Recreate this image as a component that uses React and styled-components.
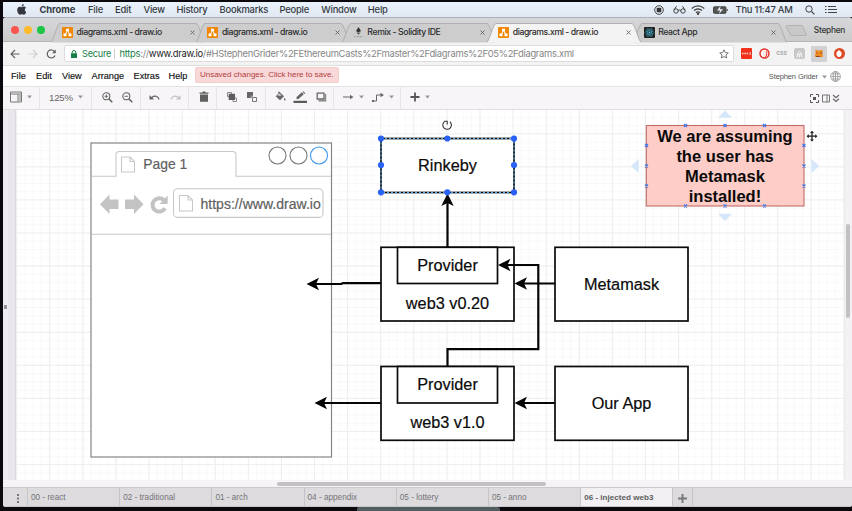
import React from 'react';
import styled, { createGlobalStyle } from 'styled-components';

const Global = createGlobalStyle`
  * { box-sizing: border-box; }
  html, body { margin: 0; background: #08070a; }
  body { width: 852px; height: 511px; overflow: hidden; font-family: "Liberation Sans", Arial, sans-serif; }
  svg { display: block; flex: none; }
`;

const Screen = styled.div`
  width: 852px; height: 511px; padding: 2px 0 0 3px; overflow: hidden;
  display: flex; flex-direction: column; background: #0b090d;
`;

/* ---------- macOS menu bar ---------- */
const MacBar = styled.header`
  height: 15px; flex: none; display: flex; align-items: center;
  background: linear-gradient(#eaf2fb, #e1e8f1);
  font: 500 9.4px/15px Inter, sans-serif; color: #343a42;
`;
const MacLogo = styled.div`width: 36.5px; padding-left: 13.5px;`;
const MacItem = styled.span`
  width: ${p => p.$w}px; flex: none; white-space: nowrap; letter-spacing: ${p => p.$ls ?? -0.2}px;
  font-weight: ${p => (p.$bold ? 700 : 500)};
`;
const MacStatus = styled.div`display: flex; align-items: center; margin-left: auto; padding-right: 15px;`;
const Spaced = styled.div`margin-left: ${p => p.$ml || 0}px; flex: none; display: flex; align-items: center;`;

/* ---------- browser window ---------- */
const Window = styled.main`
  height: 490px; flex: none; display: flex; flex-direction: column; overflow: hidden;
  border-radius: 3px; background: #f3f2f4; border-top: 1px solid #aeb2b8;
`;
const TabStrip = styled.div`
  height: 24px; flex: none; display: flex; align-items: flex-end;
  background: linear-gradient(#d6d7d9, #cbcbcc); border-bottom: 1px solid #b4b4b4;
`;
const Lights = styled.div`width: 48px; height: 23px; padding: 8px 0 0 8px; display: flex; gap: 5.2px;`;
const Light = styled.i`width: 8px; height: 8px; border-radius: 50%; background: ${p => p.$c};`;
const TabBox = styled.div`
  position: relative; width: 154px; height: 19px; margin: 0 -8.6px -1px 0; flex: none;
  z-index: ${p => (p.$active ? 2 : 1)};
  display: flex; align-items: center; padding: 0 10.5px 0 11px;
  font: 500 8.7px/19px Inter, sans-serif; color: #2b2b2b; white-space: nowrap;
`;
const TabShape = styled.svg`position: absolute; left: 0; top: 0; z-index: -1;`;
const TabTitle = styled.span`flex: 1; margin-left: 3.5px; letter-spacing: ${p => p.$ls}px;`;
const NewTab = styled.div`width: 24px; padding: 0 0 2px 7px; height: 17px;`;
const Profile = styled.span`margin-left: auto; padding-right: 7px; font: 500 8.3px/22px Inter, sans-serif; letter-spacing: -0.25px; color: #333;`;

const NavBar = styled.div`
  height: 24px; flex: none; display: flex; align-items: center; background: #f4f3f4;
  border-bottom: 1px solid #dedede; padding-right: 7px;
`;
const NavButtons = styled.div`width: 61px; display: flex; gap: 8px; padding-left: 7px;`;
const Omnibox = styled.div`
  width: 670px; height: 17px; background: #fff; border: 1px solid #dcdcdc; border-radius: 2px;
  display: flex; align-items: center; padding: 0 4px 0 6px;
  font: 400 9.4px/15px Inter, sans-serif; color: #858585; white-space: nowrap;
`;
const Secure = styled.span`
  margin-left: 5px; width: 33px; color: #178049; letter-spacing: -0.25px; border-right: 1px solid #ccc;
  line-height: 10px; font-size: 9.2px;
`;
const Url = styled.span`flex: 1; margin-left: 4.5px; letter-spacing: -0.285px; em { font-style: normal; color: #178049; } b { font-weight: 400; color: #222; }`;
const Extensions = styled.div`flex: 1; display: flex; align-items: center; justify-content: space-between; padding-left: 7px;`;
const ExtTile = styled.div`
  width: ${p => p.$w || 11}px; height: ${p => p.$h || 11}px; border-radius: ${p => p.$r ?? 1}px;
  background: ${p => p.$bg || 'transparent'}; display: flex; align-items: center; justify-content: center;
  font: 600 6.5px/11px Inter, sans-serif; color: #aaa;
`;

/* ---------- editor ---------- */
const MenuRow = styled.nav`
  height: 21px; flex: none; display: flex; align-items: center; background: #fff; padding: 0 11px 0 8px;
  font-size: 9.2px; color: #111; border-bottom: 1px solid #e4e2e4;
`;
const MenuItem = styled.span`width: ${p => p.$w}px; flex: none; padding-bottom: 1px; -webkit-text-stroke: 0.15px #111;`;
const SaveNotice = styled.div`
  width: 144px; height: 16px; margin: 0 0 2px 0; border-radius: 2px; background: #f8d8d8; border: 1px solid #f3cccc;
  color: #b2403f; font-size: 8px; line-height: 14px; padding-left: 4px; white-space: nowrap; letter-spacing: -0.02px;
`;
const User = styled.div`margin-left: auto; display: flex; align-items: center; gap: 3.5px; font-size: 7.5px; color: #555; padding-top: 1px; letter-spacing: -0.12px;`;
const ToolRow = styled.div`
  height: 23px; flex: none; display: flex; background: #f7f5f7; border-bottom: 1px solid #e0dee0; color: #666;
`;
const ToolGroup = styled.div`
  width: ${p => p.$w}px; height: 22px; flex: none; display: flex; align-items: center; padding: 0 0 2px ${p => p.$pl}px;
  gap: ${p => p.$gap || 0}px; border-right: 1px solid ${p => (p.$last ? 'transparent' : '#e6e4e6')};
`;
const Zoom = styled.span`width: 24px; font-size: 9.6px; color: #666; letter-spacing: -0.15px;`;
const ViewTools = styled.div`margin-left: auto; display: flex; align-items: center; gap: 2.5px; padding: 0 12px 0 0;`;

const Workspace = styled.div`height: 370px; flex: none; display: flex; background: #e9e7eb;`;
const SideRail = styled.aside`width: 13px; border-right: 1px solid #dcdadd; border-left: 5px solid #eeecf0; display: flex; align-items: center;`;
const Grip = styled.i`width: 3px; height: 4px; margin: 24px 0 0 -4px; background: #96949a; flex: none;`;
const Canvas = styled.section`position: relative; width: 828px; height: 370px; background: #fff; overflow: hidden;`;
const Art = styled.svg`position: absolute; left: 0; top: 0;`;
const Node = styled.div`
  position: absolute; left: ${p => p.$x - 16}px; top: ${p => p.$y - 110}px; width: ${p => p.$w}px; height: ${p => p.$h}px;
  display: flex; align-items: ${p => (p.$low ? 'flex-end' : 'center')}; justify-content: center; text-align: center;
  padding-bottom: ${p => (p.$low ? 8 : 0)}px;
  font-size: 16.3px; line-height: 20px; color: #0a0a0a; white-space: pre; -webkit-text-stroke: 0.2px #0a0a0a;
`;
const Note = styled(Node)`font-weight: 700; font-size: 16.5px; -webkit-text-stroke: 0;`;
const Mock = styled.span`
  position: absolute; left: ${p => p.$x - 16}px; top: ${p => p.$y - 110}px; font-size: ${p => p.$s}px; line-height: 16px; color: #5f5f5f; white-space: nowrap;
  -webkit-text-stroke: 0.2px #5f5f5f;
`;
const VScroll = styled.div`width: 8px; background: #f3f1f4; padding: 114px 2px 0 1px; border-left: 1px solid #ebe9ec;`;
const VThumb = styled.i`display: block; width: 4px; height: 94px; border-radius: 2px; background: #c2c0c3;`;
const HScroll = styled.div`height: 7px; flex: none; background: #f6f4f7; padding: 2px 0 0 274px;`;
const HThumb = styled.i`display: block; width: 269px; height: 4px; border-radius: 2px; background: #c2c0c3;`;

const PageBar = styled.footer`
  height: 20px; flex: none; display: flex; background: #dddbde; border-top: 1px solid #cbc9cc; padding-left: 5px;
  border-bottom: 1px solid #c9c7ca;
`;
const PageMenu = styled.div`width: 20px; border-right: 1px solid #c6c4c7; display: flex; align-items: center; justify-content: center; padding-top: 2px;`;
const PageTab = styled.div`
  width: 92.2px; padding-left: 3px; border-right: 1px solid #c6c4c7; font-size: ${p => (p.$active ? 8.1 : 8.2)}px; line-height: 20px;
  color: ${p => (p.$active ? '#5e5e5e' : '#757376')}; font-weight: ${p => (p.$active ? 700 : 400)};
  background: ${p => (p.$active ? '#f1eff2' : 'transparent')}; white-space: nowrap;
`;
const AddPage = styled(PageMenu)`width: 20px;`;
const Dock = styled.div`height: 4px; width: 143px; margin-left: 354px; background: #525d60; flex: none; border-radius: 2px 2px 0 0;`;

/* ---------- icons ---------- */
const Caret = () => <svg width="5" height="4"><path d="M0 .5h5L2.5 3.5z" fill="#999" /></svg>;
const DrawIo = () => (
  <svg width="11" height="11" viewBox="0 0 11 11">
    <rect width="11" height="11" rx=".8" fill="#f08705" />
    <path d="M5.5 3.5 3 8M5.5 3.5 8 8" stroke="#fff" strokeWidth="1" />
    <path d="M4 1.7h3v2.6H4zM1.5 6.5h3v2.7h-3zM6.5 6.5h3v2.7h-3z" fill="#fff" />
  </svg>
);
const Remix = () => (
  <svg width="11" height="11" viewBox="0 0 11 11">
    <path d="M5.5 0 8 4 5.5 5.6 3 4zM3.2 4.8l2.3 1.5 2.3-1.5-2.3 3z" fill="#333" />
    <path d="M1 9.7h9" stroke="#888" strokeWidth=".8" strokeDasharray="1 .5" />
  </svg>
);
const ReactIcon = () => (
  <svg width="11" height="11" viewBox="0 0 11 11">
    <rect width="11" height="11" rx="1" fill="#222" />
    <g fill="none" stroke="#3fa9c4" strokeWidth=".6">
      {[0, 60, 120].map(a => <ellipse key={a} cx="5.5" cy="5.5" rx="4.4" ry="1.7" transform={`rotate(${a} 5.5 5.5)`} />)}
    </g>
    <circle cx="5.5" cy="5.5" r=".8" fill="#61dafb" />
  </svg>
);
const Close = () => <svg width="5" height="5"><path d="M.5.5l4 4m0-4l-4 4" stroke="#666" strokeWidth=".9" /></svg>;
const Magnifier = ({ plus }) => (
  <svg width="11" height="11" viewBox="0 0 11 11" fill="none" stroke="#666">
    <circle cx="4.3" cy="4.3" r="3.5" strokeWidth="1.1" /><path d="M6.900 6.900l3.400 3.400" strokeWidth="1.5" />
    <path d={plus ? 'M2.5 4.3h3.600M4.3 2.5v3.600' : 'M2.5 4.3h3.600'} strokeWidth=".9" />
  </svg>
);
const Undo = ({ flip }) => (
  <svg width="11" height="7" viewBox="0 0 11 7">
    <g transform={flip ? 'translate(11 0) scale(-1 1)' : undefined} fill={flip ? '#c4c2c4' : '#666'}>
      <path d="M.5 1v4.5H5L3.4 3.8C5.8 2 8.5 2.7 9.6 5.8l1-.5C9.3 1.4 5.4.5 2.4 2.9z" />
    </g>
  </svg>
);
const Trash = () => <svg width="10" height="12"><path d="M.5 1.4h2.7L4 .6h2l.8.8h2.7v1.3h-9zM1 3.5h8v7.3H1z" fill="#5f5f5f" /></svg>;
const Layers = ({ back }) => back ? (
  <svg width="12" height="12">
    <path d="M1 1h6v6H1z" fill="#666" />
    <path d="M4.500 4.500h2.500v2.500H4.500z" fill="#999" />
    <path d="M7 6.500h3.500V10.500H6.500V7" fill="#f7f5f7" stroke="#777" />
  </svg>
) : (
  <svg width="12" height="12">
    <path d="M1.500 1.500h4v4h-4zM7 7h3.500v3.500H7z" fill="#f7f5f7" stroke="#888" />
    <path d="M2.700 2.700h6.300v6.300H2.700z" fill="#5c5c5c" />
  </svg>
);
const Fill = () => (
  <svg width="11" height="12" viewBox="0 0 11 12">
    <path d="M3 1.2l1-.7 5 4.8-4 4-4.3-4 3-2.8z" fill="#666" /><path d="M2.400 4.600h4.200L4.600 2.700z" fill="#f7f5f7" /><path d="M9.7 6.8c1.3 1.7 1 2.7 0 2.7s-1.200-1 0-2.700z" fill="#666" />
  </svg>
);
const Pencil = () => <svg width="15" height="13"><path d="M3.500 8 3.600 6 8.800 1.300l2 2L5.500 8zM9.500.8l.8-.6 2 2-.8.7z" fill="#666" /><path d="M.5 9.700h13.500v2.300H.5z" fill="#5c5c5c" /></svg>;
const Shadow = () => <svg width="11" height="10"><path d="M1.200 1.200h6.800v5.800H1.200z" fill="none" stroke="#666" strokeWidth="1.300" /><path d="M9.500 2v6.800H2.500" fill="none" stroke="#888" strokeWidth="1.400" /></svg>;

const Tab = ({ icon, title, active, ls = -0.05 }) => (
  <TabBox $active={active}>
    <TabShape width="154" height="20">
      <path d="M0 19.500 C2.500 18 6 1 9 .5 H145 C148 1 151.500 18 154 19.500 Z" fill={active ? '#f4f3f4' : '#cdcdce'} />
      <path d="M0 19 C2.500 18 6 1 9 .5 H145 C148 1 151.500 18 154 19" fill="none" stroke="#aaaaab" strokeWidth=".9" />
    </TabShape>
    {icon}<TabTitle $ls={ls}>{title}</TabTitle><Close />
  </TabBox>
);

/* Diagram geometry uses window coordinates; the viewBox shifts it into the canvas. */
const HANDLES = [[381, 138.500], [447.300, 138.500], [514, 138.500], [381, 165], [514, 165], [381, 192.300], [447.300, 192.300], [514, 192.300]];
const PORTS = [[685.500, 125.500], [725, 125.500], [764.500, 125.500], [685.500, 206], [725, 206], [764.500, 206], [646.500, 145.500], [646.500, 166], [646.500, 186], [804, 145.500], [804, 166], [804, 186]];
const Head = ({ x, y, up }) => <path transform={`translate(${x} ${y})${up ? ' rotate(90)' : ''}`} d="M0 0 12.500-6.200 9.500 0 12.500 6.200z" fill="#050505" />;

const Diagram = () => (
  <Art width="828" height="370" viewBox="16 110 828 370">
    <defs>
      <pattern id="minor" x="16.250" y="100.300" width="8.270" height="8.270" patternUnits="userSpaceOnUse">
        <path d="M0 .5H8.270M.5 0V8.270" stroke="#f8f8f8" fill="none" />
      </pattern>
      <pattern id="major" x="16.150" y="100.200" width="33.100" height="33.070" patternUnits="userSpaceOnUse">
        <path d="M0 .5H33.100M.5 0V33.070" stroke="#eeeeee" fill="none" />
      </pattern>
    </defs>
    <rect x="16" y="110" width="828" height="370" fill="url(#minor)" />
    <rect x="16" y="110" width="828" height="370" fill="url(#major)" />

    <rect x="91" y="143" width="240.500" height="314" fill="#fff" stroke="#858585" strokeWidth="1.200" />
    <g fill="none" stroke="#c8c8c8" strokeWidth="1.100">
      <path d="M92 176.300H116V155q0-3.500 3.500-3.500H232.500q3.500 0 3.500 3.500V176.300H331M92 234.300H331" />
      <rect x="173.500" y="188.700" width="149.500" height="28.700" rx="4" />
      <path d="M121.500 157h8.500l4.500 4.500v10.500h-13zM130 157v4.500h4.500M179.500 195.500h8.500l4.500 4.500v11h-13zM188 195.500v4.500h4.500" />
    </g>
    <g fill="none" strokeWidth="1.100">
      <circle cx="277.500" cy="155.500" r="8.500" stroke="#777" /><circle cx="298.500" cy="155.500" r="8.500" stroke="#777" /><circle cx="319" cy="155.500" r="8.500" stroke="#3b95f0" />
    </g>
    <path d="M100 204.200 109.500 194.500V199.500H118.500V209H109.500V214zM143.500 204.200 134 194.500V199.500H125V209H134V214z" fill="#c3c3c3" />
    <path d="M165 208.300a6.700 6.700 0 1 1-1.200-8.300" fill="none" stroke="#c3c3c3" strokeWidth="4" />
    <path d="M167.700 195.500V204H159.500z" fill="#c3c3c3" />

    <g fill="#fff" stroke="#0a0a0a" strokeWidth="1.700">
      <rect x="381" y="138.500" width="133" height="54" />
      <rect x="381" y="247.300" width="133" height="73.700" /><rect x="397.500" y="247.300" width="100" height="36.200" />
      <rect x="381" y="366.500" width="133" height="73.800" /><rect x="397.500" y="366.500" width="100" height="36.500" />
      <rect x="555" y="247.300" width="133" height="73.700" /><rect x="555" y="366.500" width="133" height="73.800" />
    </g>
    <rect x="381" y="138.500" width="133" height="54" fill="none" stroke="#55a9e8" strokeWidth="1.200" strokeDasharray="2 2" />
    <g fill="none" stroke="#050505" strokeWidth="2.200">
      <path d="M447.500 247V200M381 283.200H343L341 284H315M381 403H324M555 283.500H524M555 403H524M447.500 366V349.200H538.300V265H507" />
    </g>
    <Head x="447.500" y="193.500" up /><Head x="306.500" y="284" /><Head x="314.500" y="403" />
    <Head x="514.500" y="283.500" /><Head x="514.500" y="403" /><Head x="498" y="265" />
    {HANDLES.map(([x, y]) => <circle key={`${x}-${y}`} cx={x} cy={y} r="3.100" fill="#2a62f5" />)}
    <path d="M444.200 121.800a4.300 4.300 0 1 0 5.600-.2M444 121.300h3.200v3.200" fill="none" stroke="#333" strokeWidth="1.100" />

    <rect x="646.300" y="125.500" width="157.700" height="80.500" fill="#ffcdc8" stroke="#bf6c67" strokeWidth="1.100" />
    <path d="M718 117.800 725 110.500 732 117.800zM718 213.800 725 221 732 213.800zM638.800 159 631 166 638.800 173zM811.500 159 819.300 166 811.500 173z" fill="#d5e6fb" />
    {PORTS.map(([x, y]) => <path key={`${x}-${y}`} d={`M${x - 1.500} ${y - 1.500}l3 3m0-3l-3 3`} stroke="#3f78e8" strokeWidth="1.200" />)}
    <path d="M807.500 136.200h9M812 131.700v9" stroke="#222" strokeWidth="1.300" />
    <path d="M812 130.800l2 2.200h-4zM812 141.600l2-2.200h-4zM806.600 136.200l2.200-2v4zM817.400 136.200l-2.200-2v4z" fill="#222" />
  </Art>
);

const MAC = [['File', 27], ['Edit', 28.500], ['View', 33], ['History', 43], ['Bookmarks', 60], ['People', 41.800], ['Window', 46.500], ['Help', 24]];
const MENUS = [['File', 25], ['Edit', 26], ['View', 29.500], ['Arrange', 42], ['Extras', 35], ['Help', 26.500]];
const PAGES = ['00 - react', '02 - traditional', '01 - arch', '04 - appendix', '05 - lottery', '05 - anno', '06 - injected web3'];

export default function App() {
  return (
    <Screen>
      <Global />
      <MacBar>
        <MacLogo>
          <svg width="9.500" height="11" viewBox="0 0 19 22"><path d="M13.500 0c.2 2.700-2 4.800-4.200 4.900C9 2.500 11 .4 13.500 0zM9.700 6.300c1 0 2.300-1.200 4.300-1.100 1.600.1 3 .8 3.900 2.100-3.500 2.200-2.900 6.900.8 8.300-.9 2.600-2.700 5.600-4.700 5.700-1.400 0-2.100-.9-3.900-.9s-2.600.9-3.900.9C3.500 21.300.4 16.200.4 11.900c0-4.200 2.700-6.600 5.400-6.600 1.700 0 2.900 1 3.900 1z" fill="#34383e" /></svg>
        </MacLogo>
        <MacItem $w={48.500} $bold $ls={-0.080}>Chrome</MacItem>
        {MAC.map(([t, w]) => <MacItem key={t} $w={w}>{t}</MacItem>)}
        <MacStatus>
          <svg width="10" height="10" viewBox="0 0 10 10"><circle cx="5" cy="5" r="4.300" fill="none" stroke="#333" strokeWidth=".9" /><rect x="2.700" y="2.700" width="4.600" height="4.600" rx=".8" fill="#333" /></svg>
          <Spaced $ml={8.500}><svg width="13" height="9" fill="none" stroke="#444"><circle cx="3" cy="6" r="2.200" /><circle cx="10" cy="6" r="2.200" /><path d="M5 5.500q1.500-1 3 0M.9 5 3.500 1.200M12 5 9.500 1.200" /></svg></Spaced>
          <Spaced $ml={5}><svg width="14" height="10" viewBox="0 0 14 10" fill="none" stroke="#444" strokeWidth="1.300"><path d="M.7 3.400q6.300-5 12.600 0M2.900 5.600q4.100-3.200 8.200 0M4.900 7.600q2.100-1.500 4.200 0" /><circle cx="7" cy="9" r=".5" /></svg></Spaced>
          <Spaced $ml={8.500}><svg width="15" height="8"><rect x=".5" y=".8" width="12.500" height="6.500" rx="1" fill="#555" stroke="#444" /><path d="M14.200 3v2" stroke="#444" /><path d="M7.500 0 4 4.500h3L6 8l4-4.700H7z" fill="#e9eff7" /></svg></Spaced>
          <Spaced $ml={7.500}><MacItem $w={69} $ls={-0.220}>Thu 11:47 AM</MacItem></Spaced>
          <svg width="10" height="10" fill="none" stroke="#444"><circle cx="4" cy="4" r="3.200" /><path d="M6.400 6.400l3 3" strokeWidth="1.300" /></svg>
          <Spaced $ml={10.500}><svg width="12" height="9"><path d="M0 1.500h1.500M0 4.500h1.500M0 7.500h1.500M3 1.500h8M3 4.500h9M3 7.500h9" stroke="#444" strokeWidth="1.200" /></svg></Spaced>
        </MacStatus>
      </MacBar>

      <Window>
        <TabStrip>
          <Lights><Light $c="#fb564e" /><Light $c="#fdbb2c" /><Light $c="#1dc544" /></Lights>
          <Tab icon={<DrawIo />} title="diagrams.xml - draw.io" ls={-0.430} />
          <Tab icon={<DrawIo />} title="diagrams.xml - draw.io" ls={-0.430} />
          <Tab icon={<Remix />} title="Remix - Solidity IDE" ls={-0.400} />
          <Tab icon={<DrawIo />} title="diagrams.xml - draw.io" ls={-0.430} active />
          <Tab icon={<ReactIcon />} title="React App" ls={-0.420} />
          <NewTab><svg width="24" height="13"><path d="M1 3Q1 1.500 2.500 1.500H16q1.500 0 2 1.500l3 7q.3 1.500-1 1.500H7q-1.500 0-2-1.500z" fill="#c8c8c9" stroke="#aaa" strokeWidth=".8" /></svg></NewTab>
          <Profile>Stephen</Profile>
        </TabStrip>

        <NavBar>
          <NavButtons>
            <svg width="10" height="10" fill="none" stroke="#606060" strokeWidth="1.100"><path d="M9.500 5H1.200M5 1 1 5l4 4" /></svg>
            <svg width="10" height="10" fill="none" stroke="#cfcfcf" strokeWidth="1.100"><path d="M.5 5h8.300M5 1l4 4-4 4" /></svg>
            <svg width="11" height="10" fill="none" stroke="#606060" strokeWidth="1.200"><path d="M9 6.500A4 4 0 1 1 8.600 2.700" /><path d="M9.800.5v3.800H6z" fill="#606060" stroke="none" /></svg>
          </NavButtons>
          <Omnibox>
            <svg width="6" height="8"><path d="M0 3.200h6V8H0z" fill="#178049" /><path d="M1.200 3.500V2.300a1.800 1.800 0 0 1 3.600 0v1.200" fill="none" stroke="#178049" /></svg>
            <Secure>Secure</Secure>
            <Url><em>https</em>://<b>www.draw.io</b>/#HStephenGrider%2FEthereumCasts%2Fmaster%2Fdiagrams%2F05%2Fdiagrams.xml</Url>
            <svg width="10" height="10" viewBox="0 0 10 10"><path d="M5 .8l1.300 2.800 3 .3L7 6l.7 3L5 7.500 2.300 9 3 6 .7 3.900l3-.3z" fill="none" stroke="#555" strokeWidth=".8" /></svg>
          </Omnibox>
          <Extensions>
            <ExtTile $bg="#f3301c"><svg width="9" height="3"><path d="M0 1.500h6.500" stroke="#ffd5cc" strokeWidth="1.600" strokeDasharray="1.600 .7" /><path d="M8.200 0v3" stroke="#fff" strokeWidth=".8" /></svg></ExtTile>
            <ExtTile><svg width="11" height="11"><circle cx="5.500" cy="5.500" r="4.500" fill="#fff" stroke="#e8322a" strokeWidth="1.500" /><path d="M3.800 3h3.700v4L5.800 9 4 7z" fill="#f9e4e1" /><path d="M7.800 2.500v4.500L6 9.500" stroke="#e8322a" fill="none" /></svg></ExtTile>
            <ExtTile>css</ExtTile>
            <ExtTile $bg="#c9c8c9" $r={2}><svg width="7" height="8" fill="none" stroke="#f7f7f7"><path d="M1 7.500 2 3q1.500-3 3 0l1 4.500M2 4.500h3M3.500 5v2.500" /></svg></ExtTile>
            <ExtTile $bg="#d2d1d3" $w={16} $h={16}><svg width="8" height="9"><path d="M0 1h2.500l1 .7L7.500.8v4L8 8H0V6l.8-2.500z" fill="#ef8a24" /><path d="M5 3.500h2.500L6.500 5zM1 3.500l2 .5-1 1zM1 7h4v1H1z" fill="#8a4b1a" /></svg></ExtTile>
            <ExtTile $bg="#de4a26" $r={6}><svg width="6" height="7"><path d="M3 0l2.500 2.500v2.500L4 7H2L.5 5V2.500z" fill="#fff" /></svg></ExtTile>
          </Extensions>
        </NavBar>

        <MenuRow>
          {MENUS.map(([t, w]) => <MenuItem key={t} $w={w}>{t}</MenuItem>)}
          <SaveNotice>Unsaved changes. Click here to save.</SaveNotice>
          <User>Stephen Grider<Caret />
            <svg width="11" height="11" fill="none" stroke="#8b8b8b" strokeWidth=".7"><circle cx="5.500" cy="5.500" r="4.900" /><ellipse cx="5.500" cy="5.500" rx="2.300" ry="4.900" /><path d="M.6 5.500h9.800M5.500.6v9.800M1.500 3h8M1.500 8h8" /></svg>
          </User>
        </MenuRow>

        <ToolRow>
          <ToolGroup $w={37} $pl={7} $gap={4.500}>
            <svg width="12" height="12"><path d="M.5 1h11v10H.5zM.5 3h11M8 3v8" fill="none" stroke="#777" /><path d="M8.500 3.500h2.500v7H8.500z" fill="#bbb" /></svg><Caret />
          </ToolGroup>
          <ToolGroup $w={52} $pl={9} $gap={5}><Zoom>125%</Zoom><Caret /></ToolGroup>
          <ToolGroup $w={48.500} $pl={10} $gap={9}><Magnifier plus /><Magnifier /></ToolGroup>
          <ToolGroup $w={48.500} $pl={8.500} $gap={9.500}><Undo /><Undo flip /></ToolGroup>
          <ToolGroup $w={28} $pl={9.500}><Trash /></ToolGroup>
          <ToolGroup $w={48.500} $pl={8.500} $gap={8}><Layers /><Layers back /></ToolGroup>
          <ToolGroup $w={68} $pl={9} $gap={7.500}><Fill /><Pencil /><Shadow /></ToolGroup>
          <ToolGroup $w={67} $pl={9.500} $gap={4.500}>
            <svg width="11" height="6"><path d="M0 3h8" stroke="#666" /><path d="M7 .8 10.500 3 7 5.200z" fill="#666" /></svg><Caret />
            <Spaced $ml={4}><svg width="12" height="11"><path d="M1 9h3.500V3H9" fill="none" stroke="#666" /><path d="M8.500.8 12 3 8.500 5.200zM0 8h2v2H0z" fill="#666" /></svg></Spaced><Caret />
          </ToolGroup>
          <ToolGroup $w={40} $pl={9} $gap={5} $last><svg width="10" height="10"><path d="M5 .5v9M.5 5h9" stroke="#555" strokeWidth="1.800" /></svg><Caret /></ToolGroup>
          <ViewTools>
            <svg width="9" height="9"><path d="M.5 3V.5H3M6 .5h2.500V3M8.500 6v2.500H6M3 8.500H.5V6" fill="none" stroke="#555" /><path d="M3 3h3v3H3z" fill="#555" /></svg>
            <svg width="8" height="9"><path d="M.5 1h7v7h-7zM5 1v7" fill="none" stroke="#777" /></svg>
            <svg width="8" height="9"><path d="M1 1l3 2.700L7 1M1 4.800l3 2.700 3-2.700" fill="none" stroke="#666" strokeWidth="1.200" /></svg>
          </ViewTools>
        </ToolRow>

        <Workspace>
          <SideRail><Grip /></SideRail>
          <Canvas>
            <Diagram />
            <Mock $x={143.300} $y={156} $s={13.900}>Page 1</Mock>
            <Mock $x={200.500} $y={196} $s={14.050}>https://www.draw.io</Mock>
            <Node $x={381} $y={138} $w={133} $h={54}>Rinkeby</Node>
            <Node $x={381} $y={247} $w={133} $h={74} $low>web3 v0.20</Node>
            <Node $x={397.500} $y={247} $w={100} $h={36}>Provider</Node>
            <Node $x={381} $y={366} $w={133} $h={74} $low>web3 v1.0</Node>
            <Node $x={397.500} $y={366} $w={100} $h={36}>Provider</Node>
            <Node $x={555} $y={247} $w={133} $h={74}>Metamask</Node>
            <Node $x={555} $y={366} $w={133} $h={74}>Our App</Node>
            <Note $x={646} $y={126} $w={158} $h={80}>{'We are assuming\nthe user has\nMetamask\ninstalled!'}</Note>
          </Canvas>
          <VScroll><VThumb /></VScroll>
        </Workspace>
        <HScroll><HThumb /></HScroll>
        <PageBar>
          <PageMenu><svg width="2" height="9"><path d="M0 0h2v2H0zM0 3.500h2v2H0zM0 7h2v2H0z" fill="#777" /></svg></PageMenu>
          {PAGES.map((t, i) => <PageTab key={t} $active={i === 6}>{t}</PageTab>)}
          <AddPage><svg width="9" height="9"><path d="M4.500 0v9M0 4.500h9" stroke="#777" strokeWidth="1.900" /></svg></AddPage>
        </PageBar>
      </Window>
      <Dock />
    </Screen>
  );
}
